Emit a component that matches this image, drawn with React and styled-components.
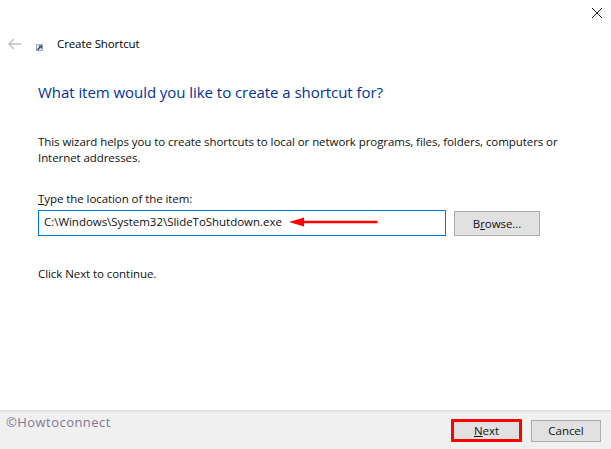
import React from "react";
import styled, { createGlobalStyle } from "styled-components";

const Global = createGlobalStyle`
  html, body { margin: 0; padding: 0; background: #fff; }
  body { font-family: "Open Sans", "Noto Sans", "Liberation Sans", sans-serif; color: #000; }
`;

const Window = styled.div`
  width: 611px;
  height: 449px;
  display: flex;
  flex-direction: column;
  overflow: hidden;
  background: #fff;
`;

const CloseRow = styled.div`
  height: 8px;
  padding: 8px 9px 0 0;
  display: flex;
  justify-content: flex-end;
`;

const TitleRow = styled.div`
  height: 20px;
  margin-top: 18px;
  padding-left: 8px;
  display: flex;
  align-items: center;
`;

const Title = styled.span`
  font-size: 11.5px;
  line-height: 20px;
  margin-left: 14px;
  letter-spacing: -0.1px;
  color: #000;
`;

const IconSlot = styled.span`
  display: flex;
  width: ${(p) => p.$w}px;
  margin: ${(p) => p.$m || "0"};
`;

const Content = styled.div`
  flex: 1;
  padding: 0 0 0 38px;
  display: flex;
  flex-direction: column;
`;

const Heading = styled.h1`
  margin: 27px 0 0;
  font-size: 15px;
  line-height: 22px;
  font-weight: 400;
  color: #003399;
  letter-spacing: -0.05px;
`;

const Body = styled.p`
  margin: 31px 0 0;
  width: 530px;
  font-size: 11.5px;
  line-height: 15.5px;
  letter-spacing: -0.07px;
  color: #111;
`;

const FieldLabel = styled.label`
  margin-top: 26px;
  font-size: 11.5px;
  line-height: 16px;
  letter-spacing: -0.07px;
  color: #111;
`;

const FieldRow = styled.div`
  margin-top: 3px;
  display: flex;
  align-items: center;
`;

const Field = styled.div`
  position: relative;
  box-sizing: border-box;
  width: 408px;
  height: 26px;
  border: 1px solid #0078d7;
  padding-left: 5px;
  font-size: 11.5px;
  line-height: 22px;
  letter-spacing: -0.03px;
  color: #111;
`;

const ArrowOverlay = styled.svg`
  position: absolute;
  left: 250px;
  top: 4px;
`;

const Button = styled.div`
  box-sizing: border-box;
  width: ${(p) => p.$w}px;
  height: ${(p) => p.$h}px;
  margin-left: ${(p) => p.$ml || 0}px;
  background: #e1e1e1;
  border: ${(p) => (p.$marked ? "3px solid #f00" : "1px solid #b3a9ad")};
  border-radius: ${(p) => (p.$marked ? 1 : 0)}px;
  display: flex;
  align-items: center;
  justify-content: center;
  font-size: 11.5px;
  letter-spacing: -0.05px;
  color: #111;
`;

const Hint = styled.p`
  margin: 30px 0 0;
  font-size: 11.5px;
  line-height: 16px;
  letter-spacing: -0.07px;
  color: #111;
`;

const Footer = styled.div`
  box-sizing: border-box;
  height: 39px;
  background: #f0f0f0;
  border-top: 2px solid #e3e3e3;
  padding: 0 10px 0 6px;
  display: flex;
  align-items: flex-start;
`;

const Watermark = styled.span`
  flex: 1;
  font-family: "Open Sans", sans-serif;
  font-size: 13px;
  line-height: 18px;
  margin-top: 1px;
  letter-spacing: 0.45px;
  color: #857795;
`;

const FooterButtons = styled.div`
  display: flex;
  align-items: center;
  margin-top: 7px;
`;

const Key = styled.u`
  text-underline-offset: 1px;
`;

export default function App() {
  return (
    <Window>
      <Global />
      <CloseRow>
        <svg width="10" height="10" viewBox="0 0 10 10">
          <path d="M0 0 L10 10 M10 0 L0 10" stroke="#222" strokeWidth="1" fill="none" />
        </svg>
      </CloseRow>
      <TitleRow>
        <IconSlot $w={13}>
          <svg width="13" height="12" viewBox="0 0 13 12">
            <path d="M1 6 H13 M6 1 L1 6 L6 11" stroke="#c4bcc0" strokeWidth="1.4" fill="none" />
          </svg>
        </IconSlot>
        <IconSlot $w={7} $m="6px 0 0 15px">
          <svg width="7" height="7" viewBox="0 0 7 7">
            <rect x="0" y="0" width="7" height="7" fill="#a9a9b2" />
            <rect x="1" y="1" width="5" height="5" fill="#e6e6ee" />
            <path d="M1.5 6 L4.5 2.5 M3 2 H5.5 V4.5" stroke="#1c3f9e" strokeWidth="1.2" fill="none" />
          </svg>
        </IconSlot>
        <Title>Create Shortcut</Title>
      </TitleRow>
      <Content>
        <Heading>What item would you like to create a shortcut for?</Heading>
        <Body>
          This wizard helps you to create shortcuts to local or network programs, files, folders, computers or
          Internet addresses.
        </Body>
        <FieldLabel>
          <Key>T</Key>ype the location of the item:
        </FieldLabel>
        <FieldRow>
          <Field>
            C:\Windows\System32\SlideToShutdown.exe
            <ArrowOverlay width="90" height="14" viewBox="0 0 90 14">
              <path d="M0 7 L15 2.5 V5.8 H88.5 V8.2 H15 V11.5 Z" fill="#f00" />
            </ArrowOverlay>
          </Field>
          <Button $w={86} $h={25} $ml={8}>
            <span>
              B<Key>r</Key>owse...
            </span>
          </Button>
        </FieldRow>
        <Hint>Click Next to continue.</Hint>
      </Content>
      <Footer>
        <Watermark>©Howtoconnect</Watermark>
        <FooterButtons>
          <Button $w={71} $h={23} $marked>
            <span>
              <Key>N</Key>ext
            </span>
          </Button>
          <Button $w={70} $h={22} $ml={9}>
            Cancel
          </Button>
        </FooterButtons>
      </Footer>
    </Window>
  );
}
